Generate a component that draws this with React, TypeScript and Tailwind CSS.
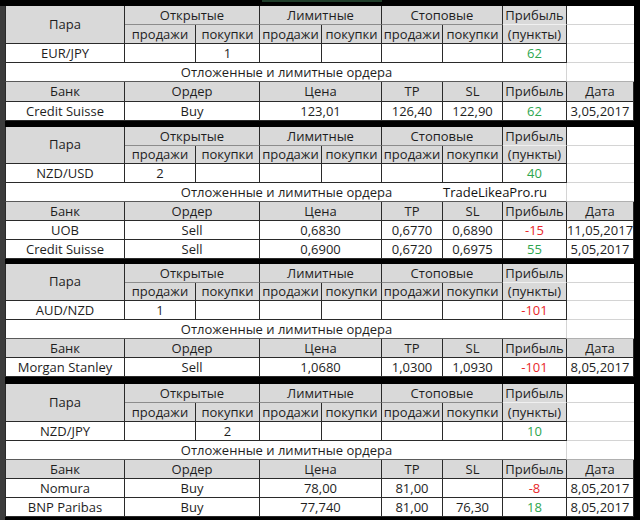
import React from "react";

type Row = { bank: string; order: string; price: string; tp: string; sl: string; profit: string; c: "g" | "r"; date: string };
type Section = {
  pair: string;
  open: [string, string];
  profit: string;
  pc: "g" | "r";
  rows: Row[];
  rowsClass: string;
  watermark?: boolean;
};

const sections: Section[] = [
  {
    pair: "EUR/JPY",
    open: ["", "1"],
    profit: "62",
    pc: "g",
    rowsClass: "grid-rows-[19px_19px_19px_19px_20px_19px]",
    rows: [{ bank: "Credit Suisse", order: "Buy", price: "123,01", tp: "126,40", sl: "122,90", profit: "62", c: "g", date: "3,05,2017" }],
  },
  {
    pair: "NZD/USD",
    open: ["2", ""],
    profit: "40",
    pc: "g",
    watermark: true,
    rowsClass: "grid-rows-[19px_18px_19px_19px_19px_19px_19px]",
    rows: [
      { bank: "UOB", order: "Sell", price: "0,6830", tp: "0,6770", sl: "0,6890", profit: "-15", c: "r", date: "11,05,2017" },
      { bank: "Credit Suisse", order: "Sell", price: "0,6900", tp: "0,6720", sl: "0,6975", profit: "55", c: "g", date: "5,05,2017" },
    ],
  },
  {
    pair: "AUD/NZD",
    open: ["1", ""],
    profit: "-101",
    pc: "r",
    rowsClass: "grid-rows-[19px_18px_19px_19px_19px_19px]",
    rows: [{ bank: "Morgan Stanley", order: "Sell", price: "1,0680", tp: "1,0300", sl: "1,0930", profit: "-101", c: "r", date: "8,05,2017" }],
  },
  {
    pair: "NZD/JPY",
    open: ["", "2"],
    profit: "10",
    pc: "g",
    rowsClass: "grid-rows-[19px_19px_19px_19px_19px_19px_19px]",
    rows: [
      { bank: "Nomura", order: "Buy", price: "78,00", tp: "81,00", sl: "", profit: "-8", c: "r", date: "8,05,2017" },
      { bank: "BNP Paribas", order: "Buy", price: "77,740", tp: "81,00", sl: "76,30", profit: "18", c: "g", date: "8,05,2017" },
    ],
  },
];

const base = "flex items-center justify-center whitespace-nowrap leading-none text-[13px] text-[#1e1e1e]";
const dark = "border-r border-b border-r-[#2a2a2a] border-b-[#2a2a2a]";
const gray = "bg-[#d9d9d9]";
const clr = (c: "g" | "r") => (c === "g" ? "text-[#2ea64f]" : "text-[#e8262a]");

function SectionTable({ s }: { s: Section }) {
  return (
    <div className={`grid grid-cols-[120px_71px_64px_62px_60px_61px_60px_64px_67px] ${s.rowsClass}`}>
      {/* header row 1 */}
      <div className={`${base} ${gray} ${dark} border-l border-l-[#2a2a2a] row-span-2 pb-[1px]`}>Пара</div>
      <div className={`${base} ${gray} border-r border-r-[#2a2a2a] border-b border-b-[#8c8c8c] col-span-2`}>Открытые</div>
      <div className={`${base} ${gray} border-r border-r-[#2a2a2a] border-b border-b-[#8c8c8c] col-span-2`}>Лимитные</div>
      <div className={`${base} ${gray} border-r border-r-[#2a2a2a] border-b border-b-[#8c8c8c] col-span-2`}>Стоповые</div>
      <div className={`${base} ${gray} border-r border-r-[#2a2a2a] border-b border-b-[#f0f0f0]`}>Прибыль</div>
      <div className="bg-white border-b border-b-[#d4d4d4]" />
      {/* header row 2 */}
      <div className={`${base} ${gray} ${dark}`}>продажи</div>
      <div className={`${base} ${gray} ${dark}`}>покупки</div>
      <div className={`${base} ${gray} ${dark}`}>продажи</div>
      <div className={`${base} ${gray} ${dark}`}>покупки</div>
      <div className={`${base} ${gray} ${dark}`}>продажи</div>
      <div className={`${base} ${gray} ${dark}`}>покупки</div>
      <div className={`${base} ${gray} ${dark}`}>(пункты)</div>
      <div className="bg-white border-b border-b-[#d4d4d4]" />
      {/* data row */}
      <div className={`${base} bg-white ${dark} border-l border-l-[#2a2a2a]`}>{s.pair}</div>
      <div className={`${base} bg-white ${dark}`}>{s.open[0]}</div>
      <div className={`${base} bg-white ${dark}`}>{s.open[1]}</div>
      <div className={`${base} bg-white ${dark}`} />
      <div className={`${base} bg-white ${dark}`} />
      <div className={`${base} bg-white ${dark}`} />
      <div className={`${base} bg-white ${dark}`} />
      <div className={`${base} bg-white ${dark} ${clr(s.pc)}`}>{s.profit}</div>
      <div className="bg-white border-b border-b-[#d4d4d4]" />
      {/* pending orders title */}
      <div className={`${base} bg-white col-span-8 border-l border-l-[#2a2a2a] border-b border-b-[#5a5a5a] border-r border-r-[#d4d4d4] relative`}>
        <span className="pl-[1px]">Отложенные и лимитные ордера</span>
        {s.watermark && (
          <span className="absolute left-[437px] top-[3px] text-[13px] leading-none text-[#111]">TradeLikeaPro.ru</span>
        )}
      </div>
      <div className="bg-white border-b border-b-[#b0b0b0]" />
      {/* bank header */}
      <div className={`${base} ${gray} ${dark} border-l border-l-[#2a2a2a]`}>Банк</div>
      <div className={`${base} ${gray} ${dark} col-span-2`}>Ордер</div>
      <div className={`${base} ${gray} ${dark} col-span-2`}>Цена</div>
      <div className={`${base} ${gray} ${dark}`}>TP</div>
      <div className={`${base} ${gray} ${dark}`}>SL</div>
      <div className={`${base} ${gray} ${dark}`}>Прибыль</div>
      <div className={`${base} ${gray} ${dark}`}>Дата</div>
      {s.rows.map((r, i) => (
        <React.Fragment key={i}>
          <div className={`${base} bg-white ${dark} border-l border-l-[#2a2a2a]`}>{r.bank}</div>
          <div className={`${base} bg-white ${dark} col-span-2`}>{r.order}</div>
          <div className={`${base} bg-white ${dark} col-span-2`}>{r.price}</div>
          <div className={`${base} bg-white ${dark}`}>{r.tp}</div>
          <div className={`${base} bg-white ${dark}`}>{r.sl}</div>
          <div className={`${base} bg-white ${dark} ${clr(r.c)}`}>{r.profit}</div>
          <div className={`${base} bg-white ${dark}`}>{r.date}</div>
        </React.Fragment>
      ))}
    </div>
  );
}

export default function App() {
  return (
    <div
      className="w-[640px] h-[520px] bg-black flex flex-col overflow-hidden"
      style={{ fontFamily: '"Open Sans", "Noto Sans", sans-serif' }}
    >
      <div className="h-[6px] shrink-0 flex">
        <div className="w-[262px]" />
        <div className="w-[120px] h-[2px] bg-[#1f3d2a]" />
      </div>
      <div className="flex flex-1">
        <div className="w-[5px] bg-[#3c3c3c]" />
        <div className="w-[629px] flex flex-col">
          <SectionTable s={sections[0]} />
          <div className="h-[6px]" />
          <SectionTable s={sections[1]} />
          <div className="h-[5px]" />
          <SectionTable s={sections[2]} />
          <div className="h-[7px]" />
          <SectionTable s={sections[3]} />
        </div>
        <div className="flex-1 bg-black" />
      </div>
    </div>
  );
}
